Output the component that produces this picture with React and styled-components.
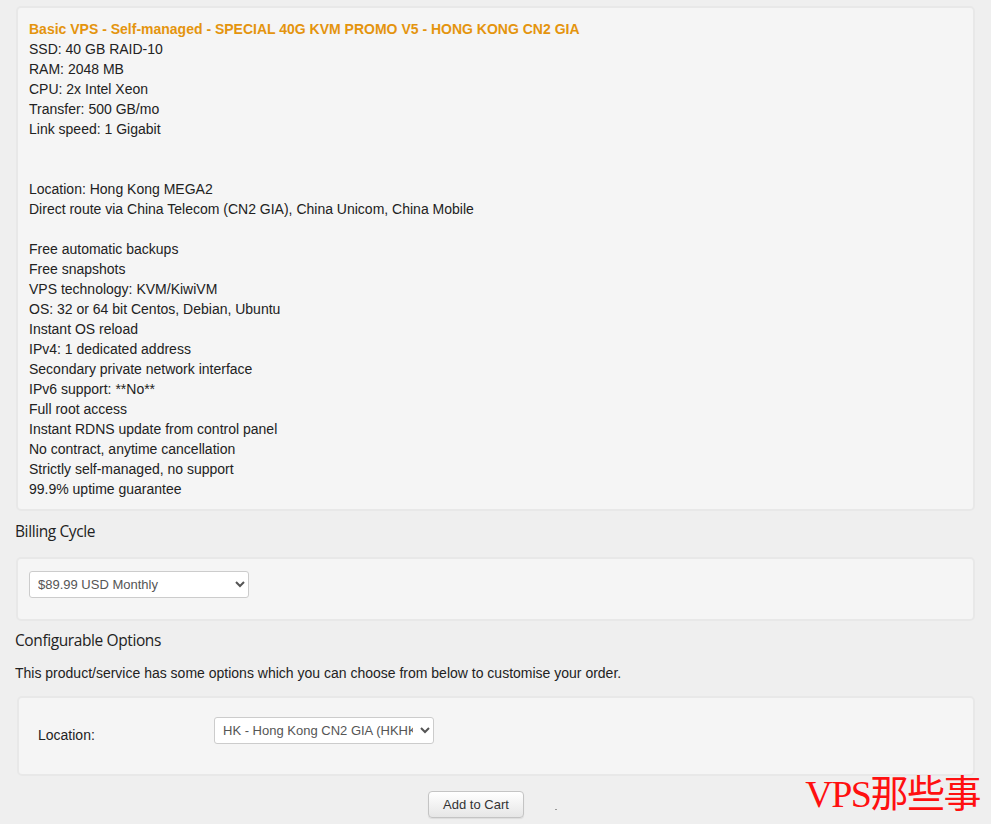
import React from 'react';
import styled, { createGlobalStyle } from 'styled-components';

const GlobalStyle = createGlobalStyle`
  html, body {
    margin: 0;
    padding: 0;
    background: #efefef;
  }
  body {
    font-family: "Liberation Sans", Arial, sans-serif;
    color: #222;
  }
`;

const Page = styled.div`
  position: relative;
  padding: 6px 16px 0 15px;
  height: 824px;
  box-sizing: border-box;
  overflow: hidden;
`;

const Card = styled.div`
  background: #f5f5f5;
  border: 2px solid #e8e8e8;
  border-radius: 5px;
  margin-left: ${(p) => p.$ml || 1}px;
  padding: ${(p) => p.$pad};
`;

const Title = styled.div`
  color: #e4940e;
  font-weight: bold;
  font-size: 14px;
  line-height: 20px;
`;

const Line = styled.div`
  font-size: 14px;
  line-height: 20px;
  min-height: 20px;
`;

const Heading = styled.h3`
  font-family: "Open Sans", "Noto Sans", sans-serif;
  font-weight: 400;
  font-size: 15.5px;
  line-height: 22px;
  color: #222;
  letter-spacing: -0.4px;
  margin: ${(p) => p.$m};
`;

const Desc = styled.p`
  font-size: 14px;
  line-height: 20px;
  margin: 0 0 13px;
`;

const Select = styled.select`
  height: 27px;
  width: ${(p) => p.$w}px;
  font-family: "Liberation Sans", Arial, sans-serif;
  font-size: 13px;
  color: #555;
  background: #fff;
  border: 1px solid #ccc;
  border-radius: 3px;
  padding: 0 4px;
  box-sizing: border-box;
`;

const OptionRow = styled.div`
  display: flex;
  align-items: center;
`;

const Label = styled.div`
  width: 176px;
  font-size: 14px;
  padding-top: 9px;
`;

const ButtonRow = styled.div`
  display: flex;
  justify-content: center;
  padding-right: 38px;
  margin-top: 15px;
`;

const Button = styled.button`
  font-family: "Liberation Sans", Arial, sans-serif;
  font-size: 13px;
  color: #333;
  height: 27px;
  width: 96px;
  background: linear-gradient(#ffffff, #e6e6e6);
  border: 1px solid #c4c4c4;
  border-radius: 4px;
  box-shadow: 0 1px 1px rgba(0, 0, 0, 0.08);
`;

const Watermark = styled.div`
  position: absolute;
  right: 11px;
  bottom: 11px;
  color: #ff1010;
  font-family: "Liberation Serif", "Noto Sans CJK SC", serif;
  font-size: 38px;
  line-height: 1;
  letter-spacing: -1.5px;
`;

const Dot = styled.span`
  position: absolute;
  left: 555px;
  top: 809px;
  width: 2px;
  height: 1px;
  background: #999;
`;

const lines = [
  'SSD: 40 GB RAID-10',
  'RAM: 2048 MB',
  'CPU: 2x Intel Xeon',
  'Transfer: 500 GB/mo',
  'Link speed: 1 Gigabit',
  '',
  '',
  'Location: Hong Kong MEGA2',
  'Direct route via China Telecom (CN2 GIA), China Unicom, China Mobile',
  '',
  'Free automatic backups',
  'Free snapshots',
  'VPS technology: KVM/KiwiVM',
  'OS: 32 or 64 bit Centos, Debian, Ubuntu',
  'Instant OS reload',
  'IPv4: 1 dedicated address',
  'Secondary private network interface',
  'IPv6 support: **No**',
  'Full root access',
  'Instant RDNS update from control panel',
  'No contract, anytime cancellation',
  'Strictly self-managed, no support',
  '99.9% uptime guarantee',
];

export default function App() {
  return (
    <>
      <GlobalStyle />
      <Page>
        <Card $pad="11px 11px 10px 11px">
          <Title>Basic VPS - Self-managed - SPECIAL 40G KVM PROMO V5 - HONG KONG CN2 GIA</Title>
          {lines.map((l, i) => (
            <Line key={i}>{l}</Line>
          ))}
        </Card>

        <Heading $m="9px 0 15px">Billing Cycle</Heading>
        <Card $pad="12px 11px 21px 11px">
          <Select $w={220} defaultValue="m">
            <option value="m">$89.99 USD Monthly</option>
          </Select>
        </Card>

        <Heading $m="8px 0 12px">Configurable Options</Heading>
        <Desc>This product/service has some options which you can choose from below to customise your order.</Desc>
        <Card $ml={2} $pad="19px 11px 30px 19px">
          <OptionRow>
            <Label>Location:</Label>
            <Select $w={220} defaultValue="hk">
              <option value="hk">HK - Hong Kong CN2 GIA (HKHK_8)</option>
            </Select>
          </OptionRow>
        </Card>

        <ButtonRow>
          <Button>Add to Cart</Button>
        </ButtonRow>
        <Dot />
        <Watermark>VPS那些事</Watermark>
      </Page>
    </>
  );
}
